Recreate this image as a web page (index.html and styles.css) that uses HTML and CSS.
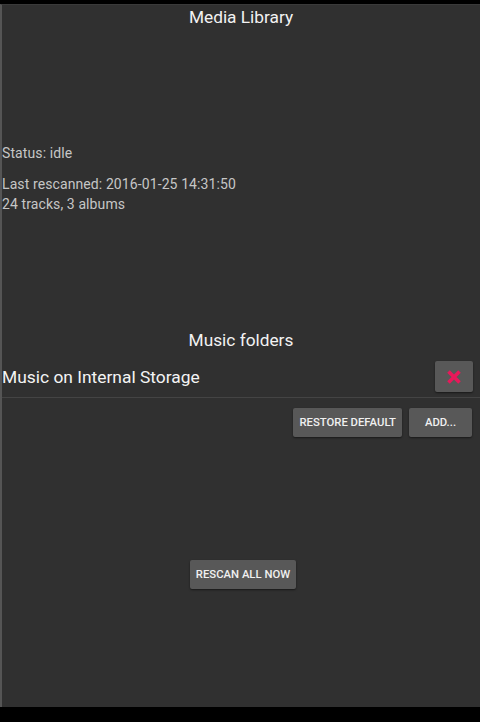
FILE: index.html
```html
<!DOCTYPE html>
<html>
<head>
<meta charset="utf-8">
<link rel="stylesheet" href="styles.css">
</head>
<body>
<div class="statusbar"></div>
<div class="screen">
  <h1 class="title">Media Library</h1>
  <div class="info">
    <p class="status">Status: idle</p>
    <p class="line">Last rescanned: 2016-01-25 14:31:50</p>
    <p class="line">24 tracks, 3 albums</p>
  </div>
  <h2 class="section">Music folders</h2>
  <div class="folder-row">
    <span class="folder-name">Music on Internal Storage</span>
    <button class="btn btn-remove" aria-label="Remove">
      <svg width="16" height="16" viewBox="0 0 16 16"><path d="M2.5 2.5 L13.5 13.5 M13.5 2.5 L2.5 13.5" stroke="#e8185a" stroke-width="3.6" stroke-linecap="butt"/></svg>
    </button>
  </div>
  <div class="actions">
    <button class="btn">RESTORE DEFAULT</button>
    <button class="btn btn-add">ADD...</button>
  </div>
  <div class="rescan">
    <button class="btn">RESCAN ALL NOW</button>
  </div>
</div>
</body>
</html>
```

FILE: styles.css
```css
html, body {
  margin: 0;
  padding: 0;
  background: #000;
  width: 480px;
  height: 722px;
  overflow: hidden;
  font-family: Roboto, "Noto Sans", sans-serif;
}
.statusbar {
  height: 4px;
  background: #000;
}
.screen {
  height: 703px;
  box-sizing: border-box;
  background: #303030;
  border-left: 2px solid #555;
  border-top: 1px solid #3a3a3a;
  display: flex;
  flex-direction: column;
}
.title {
  margin: 0;
  font-weight: 400;
  font-size: 17.3px;
  line-height: 24px;
  color: #f2f2f2;
  text-align: center;
}
.info {
  margin-top: 114px;
  color: #c6c6c6;
  font-size: 14px;
  letter-spacing: 0.1px;
}
.info p {
  margin: 0;
  line-height: 20px;
}
.status {
  margin-bottom: 11px !important;
}
.section {
  margin: 114px 0 0;
  font-weight: 400;
  font-size: 17.3px;
  line-height: 24px;
  color: #f2f2f2;
  text-align: center;
}
.folder-row {
  display: flex;
  align-items: center;
  justify-content: space-between;
  padding: 9px 7px 5px 0;
  border-bottom: 1px solid #444;
}
.folder-name {
  font-size: 17.4px;
  color: #f4f4f4;
  line-height: 24px;
}
.btn {
  font-family: Roboto, "Noto Sans", sans-serif;
  background: #585858;
  color: #f0f0f0;
  border: none;
  border-radius: 2px;
  font-size: 11.3px;
  font-weight: 500;
  height: 29px;
  padding: 0 6px;
  box-shadow: 0 1px 2px rgba(0,0,0,0.5);
}
.btn-remove {
  width: 38px;
  height: 31px;
  display: flex;
  align-items: center;
  justify-content: center;
  padding: 0;
}
.btn-add {
  width: 63px;
}
.actions {
  display: flex;
  justify-content: flex-end;
  gap: 7px;
  padding: 10px 8px 0 0;
}
.rescan {
  display: flex;
  justify-content: center;
  margin-top: 123px;
  padding-left: 4px;
}
```
